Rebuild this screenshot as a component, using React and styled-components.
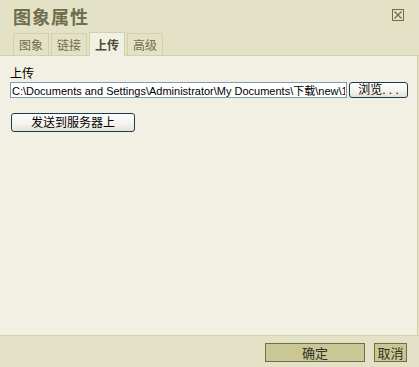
import React from 'react';
import styled, { createGlobalStyle } from 'styled-components';

const GlobalStyle = createGlobalStyle`
  html, body {
    margin: 0;
    padding: 0;
    background: #e3e2c6;
  }
  body {
    font-family: Tahoma, "Liberation Sans", "Noto Sans CJK SC", sans-serif;
    font-size: 12px;
  }
`;

const Dialog = styled.div`
  display: flex;
  flex-direction: column;
  width: 419px;
  height: 367px;
  background: #e3e2c6;
  overflow: hidden;
`;

const Header = styled.div`
  display: flex;
  flex-direction: column;
  padding: 5px 0 0 13px;
  border-bottom: 1px solid #d3d1aa;
`;

const TitleRow = styled.div`
  display: flex;
  align-items: flex-start;
  justify-content: space-between;
  height: 27px;
  padding-right: 15px;
`;

const Title = styled.div`
  font-family: "Noto Sans CJK SC", sans-serif;
  font-size: 18px;
  font-weight: 700;
  line-height: 22px;
  letter-spacing: 1px;
  color: #6e6d4c;
`;

const CloseBox = styled.div`
  width: 10px;
  height: 10px;
  margin-top: 4px;
  border: 1px solid #6e6d4c;
  display: flex;
  align-items: center;
  justify-content: center;
`;

const Tabs = styled.div`
  display: flex;
  align-items: flex-end;
  gap: 2px;
`;

const Tab = styled.div`
  height: ${(p) => (p.$active ? '23px' : '21px')};
  padding: 0 5px;
  margin-bottom: ${(p) => (p.$active ? '-1px' : '0')};
  display: flex;
  align-items: center;
  border: 1px solid #d3d1aa;
  border-bottom: none;
  background: ${(p) => (p.$active ? '#f1f0e3' : '#e3e2c6')};
  color: ${(p) => (p.$active ? '#4c4b33' : '#6e6d4c')};
  font-family: "Noto Sans CJK SC", sans-serif;
  font-size: 12px;
  font-weight: ${(p) => (p.$active ? 700 : 400)};
  box-sizing: content-box;
`;

const Body = styled.div`
  flex: 1;
  display: flex;
  flex-direction: column;
  align-items: flex-start;
  padding: 9px 11px 0 10px;
  background: #f1f0e3;
  border-right: 1px solid #d3d1aa;
  margin-right: 1px;
`;

const Label = styled.div`
  font-family: "Noto Sans CJK SC", sans-serif;
  font-size: 12px;
  line-height: 16px;
  color: #000;
`;

const FileRow = styled.div`
  display: flex;
  align-items: center;
  gap: 2px;
  margin-top: 1px;
`;

const PathInput = styled.input`
  box-sizing: border-box;
  width: 337px;
  height: 16px;
  padding: 0 1px;
  border: 1px solid #7f9db9;
  background: #fff;
  font-family: Tahoma, "Liberation Sans", "Noto Sans CJK SC", sans-serif;
  font-size: 11px;
  color: #000;
  outline: none;
`;

const XPButton = styled.button`
  box-sizing: border-box;
  width: ${(p) => p.$width}px;
  height: ${(p) => p.$height}px;
  padding: 0;
  border: 1px solid #1f3a55;
  border-radius: 3px;
  background: linear-gradient(#ffffff, #f3f2ec 60%, #e4e2d8);
  font-family: Tahoma, "Liberation Sans", "Noto Sans CJK SC", sans-serif;
  font-size: 12px;
  color: #000;
  line-height: 1;
`;

const SendButton = styled(XPButton)`
  margin-top: 15px;
  margin-left: 1px;
`;

const Footer = styled.div`
  height: 32px;
  display: flex;
  align-items: flex-start;
  justify-content: flex-end;
  gap: 9px;
  padding: 7px 12px 0 0;
  border-top: 1px solid #d3d1aa;
  box-sizing: border-box;
`;

const DialogButton = styled.button`
  box-sizing: border-box;
  width: ${(p) => p.$width}px;
  height: 19px;
  padding: 0;
  border: 1px solid #6e6d4c;
  background: #c8c795;
  font-family: "Noto Sans CJK SC", sans-serif;
  font-size: 13px;
  line-height: 1;
  color: #33321f;
`;

function CloseIcon() {
  return (
    <svg width="8" height="8" viewBox="0 0 8 8">
      <path d="M0.5 0.5 L7.5 7.5 M7.5 0.5 L0.5 7.5" stroke="#6e6d4c" strokeWidth="1.2" fill="none" />
    </svg>
  );
}

export default function App() {
  const tabs = ['图象', '链接', '上传', '高级'];
  return (
    <>
      <GlobalStyle />
      <Dialog>
        <Header>
          <TitleRow>
            <Title>图象属性</Title>
            <CloseBox>
              <CloseIcon />
            </CloseBox>
          </TitleRow>
          <Tabs>
            {tabs.map((t) => (
              <Tab key={t} $active={t === '上传'}>{t}</Tab>
            ))}
          </Tabs>
        </Header>
        <Body>
          <Label>上传</Label>
          <FileRow>
            <PathInput
              readOnly
              value="C:\Documents and Settings\Administrator\My Documents\下载\new\1.jpg"
            />
            <XPButton $width={59} $height={16}>浏览. . .</XPButton>
          </FileRow>
          <SendButton $width={124} $height={19}>发送到服务器上</SendButton>
        </Body>
        <Footer>
          <DialogButton $width={100}>确定</DialogButton>
          <DialogButton $width={33}>取消</DialogButton>
        </Footer>
      </Dialog>
    </>
  );
}
